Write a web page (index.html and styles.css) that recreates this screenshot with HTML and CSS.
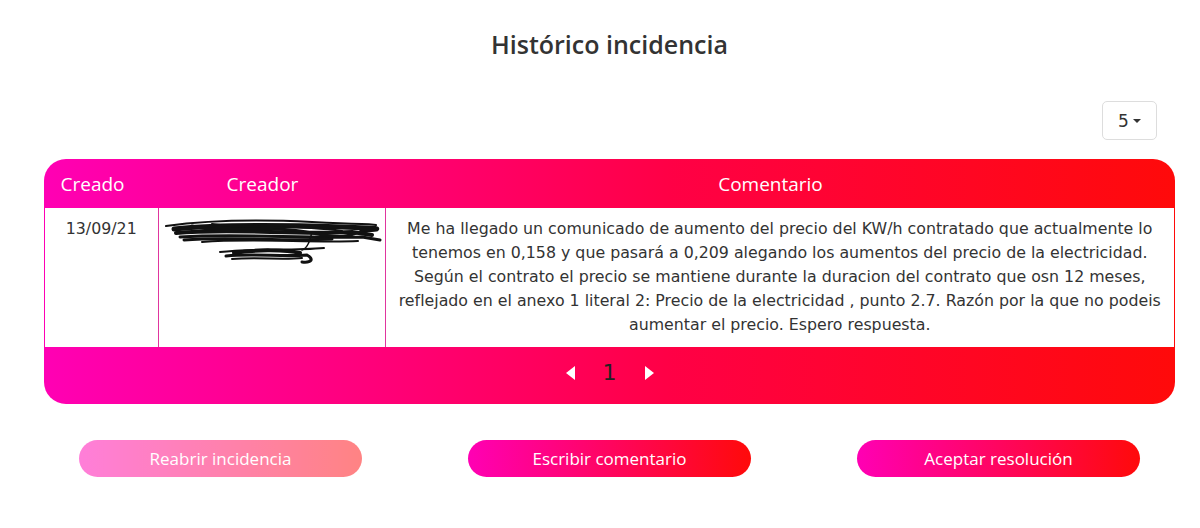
FILE: index.html
```html
<!DOCTYPE html>
<html lang="es">
<head>
    <meta charset="UTF-8" />
    <title>Histórico incidencia</title>
    <link rel="stylesheet" href="styles.css">
</head>
<body>
<div class="container">
    <h1>Histórico incidencia</h1>

    <div class="controls">
        <button class="page-size">5 <span class="caret"></span></button>
    </div>

    <div class="card">
        <table class="history">
            <thead>
            <tr>
                <th class="col-date">Creado</th>
                <th class="col-author">Creador</th>
                <th>Comentario</th>
            </tr>
            </thead>
            <tbody>
            <tr>
                <td>13/09/21</td>
                <td class="author">
                    <svg class="scribble" width="220" height="60" viewBox="0 0 220 60" fill="none" stroke="#111" stroke-linecap="round" stroke-linejoin="round">
                        <path d="M4 14 C40 9 90 7 150 10 S200 11 214 13" stroke-width="2"/>
                        <path d="M12 17 C60 12 120 13 180 15 S205 17 200 19" stroke-width="5"/>
                        <path d="M14 21 C70 16 130 23 190 20 L210 23" stroke-width="4"/>
                        <path d="M18 25 C80 21 140 27 200 25 L218 28" stroke-width="3"/>
                        <path d="M22 28 C70 24 120 30 170 27" stroke-width="3"/>
                        <path d="M30 14 C60 23 100 11 150 21 S190 15 205 22" stroke-width="3"/>
                        <path d="M40 30 C90 26 150 31 196 29" stroke-width="2"/>
                        <path d="M50 12 C90 18 130 12 180 19" stroke-width="2"/>
                        <path d="M150 20 C148 28 146 36 140 38" stroke-width="1.5"/>
                        <path d="M58 40 C90 36 130 39 162 36" stroke-width="2"/>
                        <path d="M64 44 C90 41 120 45 145 43 C152 47 150 51 140 50" stroke-width="3"/>
                        <path d="M72 41 C95 37 125 38 138 41" stroke-width="4"/>
                        <path d="M70 47 C95 45 120 48 140 46" stroke-width="2"/>
                    </svg>
                </td>
                <td class="comment">Me ha llegado un comunicado de aumento del precio del KW/h contratado que actualmente lo tenemos en 0,158 y que pasará a 0,209 alegando los aumentos del precio de la electricidad. Según el contrato el precio se mantiene durante la duracion del contrato que osn 12 meses, reflejado en el anexo 1 literal 2: Precio de la electricidad , punto 2.7. Razón por la que no podeis aumentar el precio. Espero respuesta.</td>
            </tr>
            </tbody>
        </table>

        <div class="pager">
            <span class="arrow arrow-left"></span>
            <span class="page-num">1</span>
            <span class="arrow arrow-right"></span>
        </div>
    </div>

    <div class="actions">
        <button class="btn btn-disabled">Reabrir incidencia</button>
        <button class="btn">Escribir comentario</button>
        <button class="btn">Aceptar resolución</button>
    </div>
</div>
</body>
</html>
```

FILE: styles.css
```css
body {
    font-family: 'DejaVu Sans', 'Open Sans', sans-serif;
    margin: 0;
    background-color: #fff;
    color: #333;
}

.container {
    width: 1131px;
    margin-left: 44px;
}

h1 {
    font-family: 'Open Sans', sans-serif;
    text-align: center;
    font-size: 25px;
    font-weight: 600;
    color: #333;
    margin: 28px 0 0;
    line-height: 33px;
}

.controls {
    display: flex;
    justify-content: flex-end;
    padding-right: 18px;
    margin-top: 40px;
}

.page-size {
    font-family: inherit;
    font-size: 17px;
    color: #333;
    background: #fff;
    border: 1px solid #ddd;
    border-radius: 5px;
    width: 55px;
    height: 39px;
    display: flex;
    align-items: center;
    justify-content: center;
    gap: 4px;
    padding: 0;
}

.caret {
    width: 0;
    height: 0;
    border-left: 4px solid transparent;
    border-right: 4px solid transparent;
    border-top: 4px solid #333;
}

.card {
    margin-top: 19px;
    border-radius: 22px;
    overflow: hidden;
    background: linear-gradient(to right, #ff00b4, #ff0046 55%, #ff0a0a);
    padding: 0 1px;
}

.history {
    width: 100%;
    border-collapse: collapse;
    table-layout: fixed;
}

.history th {
    font-family: 'Open Sans', sans-serif;
    color: #fff;
    font-weight: 400;
    font-size: 19px;
    height: 49px;
    padding: 0 18px 0 0;
    text-align: center;
}

.history th.col-date {
    width: 95px;
}

.history th.col-author {
    width: 209px;
}

.history td {
    background: #fff;
    font-size: 15.8px;
    line-height: 24px;
    vertical-align: top;
    text-align: center;
    padding: 9px 10px;
    border-left: 1px solid #e0359e;
    height: 121px;
}

.history td:first-child {
    border-left: none;
}

.history td.author {
    padding: 4px 0 0;
    text-align: left;
}

.scribble {
    display: block;
    margin-left: 3px;
}

.history td.comment {
    padding: 9px 8px;
}

.pager {
    height: 57px;
    display: flex;
    align-items: center;
    justify-content: center;
    gap: 28px;
}

.page-num {
    font-size: 22px;
    color: #222;
    width: 14px;
    text-align: center;
    margin-top: -6px;
}

.arrow {
    width: 0;
    height: 0;
    border-top: 7px solid transparent;
    border-bottom: 7px solid transparent;
    margin-top: -6px;
}

.arrow-left {
    border-right: 9px solid #fff;
}

.arrow-right {
    border-left: 9px solid #fff;
}

.actions {
    display: flex;
    justify-content: space-between;
    padding: 0 35px;
    margin-top: 36px;
}

.btn {
    font-family: 'Open Sans', sans-serif;
    font-size: 17px;
    color: #fff;
    width: 283px;
    height: 37px;
    border: none;
    border-radius: 19px;
    background: linear-gradient(to right, #ff00b4, #ff0a0a);
    cursor: pointer;
}

.btn-disabled {
    opacity: 0.5;
}
```
